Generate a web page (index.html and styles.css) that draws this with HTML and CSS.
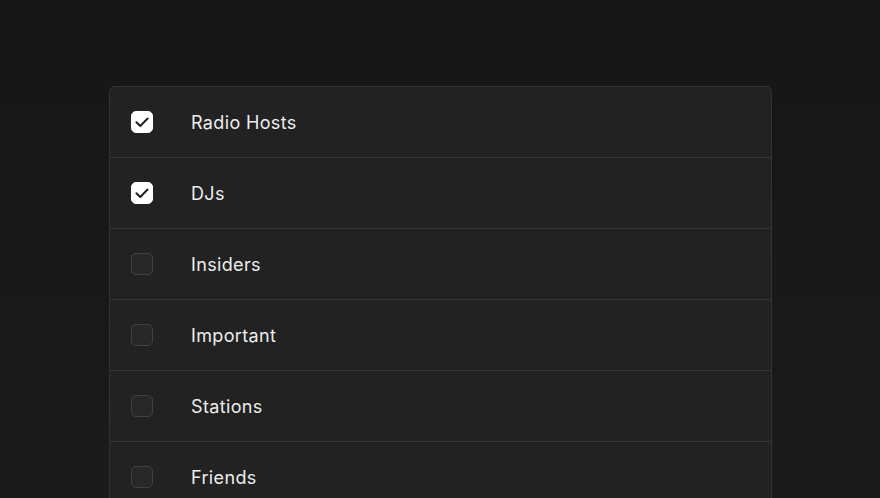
FILE: index.html
```html
<!DOCTYPE html>
<html>
<head>
<meta charset="utf-8">
<link rel="stylesheet" href="styles.css">
</head>
<body>
<div class="card">
  <div class="row"><span class="box checked"><svg viewBox="0 0 22 22" width="22" height="22"><path d="M5.4 11.2 L9.3 15 L16.6 7.5" fill="none" stroke="#222222" stroke-width="2" stroke-linecap="round" stroke-linejoin="round"/></svg></span><span class="label">Radio Hosts</span></div>
  <div class="row"><span class="box checked"><svg viewBox="0 0 22 22" width="22" height="22"><path d="M5.4 11.2 L9.3 15 L16.6 7.5" fill="none" stroke="#222222" stroke-width="2" stroke-linecap="round" stroke-linejoin="round"/></svg></span><span class="label">DJs</span></div>
  <div class="row"><span class="box"></span><span class="label">Insiders</span></div>
  <div class="row"><span class="box"></span><span class="label">Important</span></div>
  <div class="row"><span class="box"></span><span class="label">Stations</span></div>
  <div class="row"><span class="box"></span><span class="label">Friends</span></div>
</div>
</body>
</html>
```
FILE: styles.css
```css
html, body {
  margin: 0;
  padding: 0;
}
body {
  width: 880px;
  height: 498px;
  overflow: hidden;
  background: linear-gradient(180deg, #161616 0%, #1b1b1b 100%);
  font-family: Inter, "Noto Sans", sans-serif;
  padding-top: 86px;
  box-sizing: border-box;
}
.card {
  margin-left: 109px;
  width: 663px;
  box-sizing: border-box;
  background: #222222;
  border: 1px solid #323232;
  border-radius: 6px;
}
.row {
  height: 70px;
  display: flex;
  align-items: center;
  padding-left: 21px;
  border-bottom: 1px solid #363636;
}
.box {
  width: 22px;
  height: 22px;
  box-sizing: border-box;
  border-radius: 5px;
  background: #282828;
  border: 1px solid #424242;
  flex: none;
  position: relative;
}
.box.checked {
  background: #ffffff;
  border-color: #ffffff;
}
.box.checked svg {
  position: absolute;
  left: -1px;
  top: -1px;
}
.label {
  margin-left: 38px;
  color: #ededed;
  font-size: 18px;
  letter-spacing: 0.35px;
}
```
